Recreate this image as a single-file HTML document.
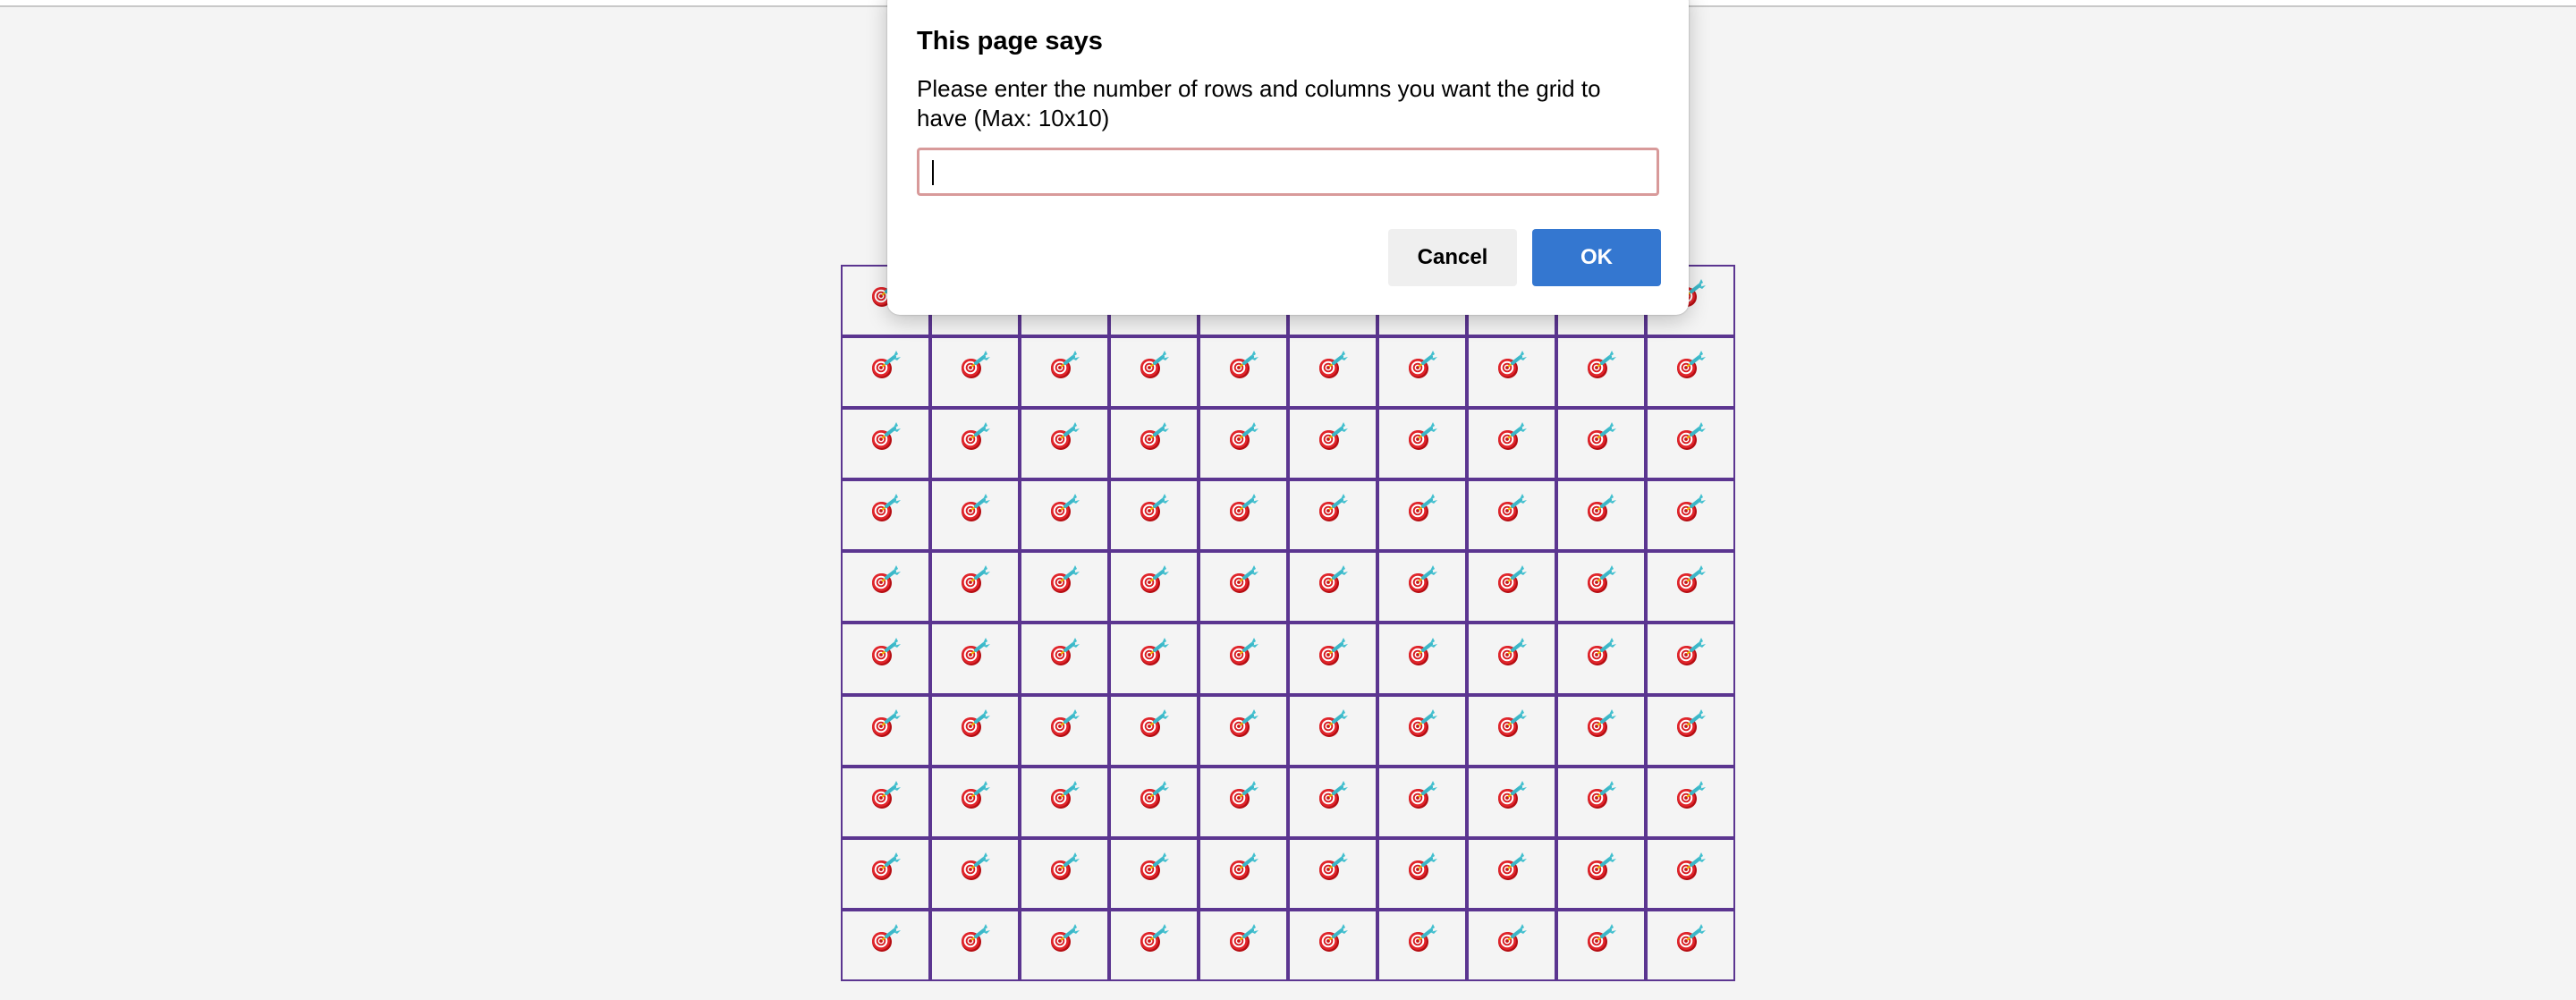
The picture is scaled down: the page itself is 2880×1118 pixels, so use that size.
<!DOCTYPE html>
<html><head><meta charset="utf-8"><style>
html,body{margin:0;padding:0;width:2880px;height:1118px;background:#f4f4f4;overflow:hidden;font-family:"Liberation Sans",Arial,sans-serif}
.topline{position:absolute;left:0;top:0;width:2880px;height:6px;background:#fff;border-bottom:2px solid #c8c8c8}
.grid{position:absolute;left:940px;top:296px;width:1000px;height:801px;display:grid;grid-template-columns:repeat(10,100px);grid-template-rows:repeat(10,80.1px)}
.c{box-sizing:border-box;border:2px solid #5b3590;display:flex;align-items:center;justify-content:center}
.c svg{width:36px;height:34px;margin-top:-16px}
.dlg{position:absolute;left:992px;top:-12px;width:896px;height:364px;background:#fff;border-radius:14px;box-shadow:0 6px 24px rgba(0,0,0,.22),0 0 2px rgba(0,0,0,.25)}
.t{position:absolute;left:33px;top:42px;font-size:29px;font-weight:bold;color:#000}
.m{position:absolute;left:33px;top:95px;font-size:26px;line-height:33px;color:#000;width:860px;white-space:nowrap}
.in{position:absolute;left:33px;top:177px;width:830px;height:54px;box-sizing:border-box;border:3px solid #d89a9a;border-radius:4px}
.cur{position:absolute;left:14px;top:11px;width:2px;height:28px;background:#000}
.b{position:absolute;top:268px;height:64px;width:144px;border-radius:4px;font-size:24px;font-weight:600;display:flex;align-items:center;justify-content:center}
.cn{left:560px;background:#efefef;color:#000}
.ok{left:721px;background:#3477d0;color:#fff}
</style></head><body>
<div class="topline"></div>
<svg width="0" height="0" style="position:absolute"><defs><symbol id="d" viewBox="0 0 36 34">
<circle cx="14" cy="21" r="11" fill="#b50d12"/><circle cx="13" cy="20" r="10" fill="#e0242a"/><circle cx="13" cy="20" r="7.3" fill="#fff"/><circle cx="13" cy="20" r="5.3" fill="#d81c22"/><circle cx="13" cy="20" r="3.4" fill="#fff"/><circle cx="13" cy="20" r="1.9" fill="#c4141a"/>
<path d="M14 19 L27 9" stroke="#f0b400" stroke-width="2"/><path d="M19 15 L28 8" stroke="#3bb7c8" stroke-width="4" stroke-linecap="round"/>
<path d="M26 9 L30 1 L32 5 Z M27 10 L35 8 L31 12 Z" fill="#43c0cf"/></symbol></defs></svg>
<div class="grid" id="g"></div>
<div class="dlg">
<div class="t">This page says</div>
<div class="m">Please enter the number of rows and columns you want the grid to<br>have (Max: 10x10)</div>
<div class="in"><div class="cur"></div></div>
<div class="b cn">Cancel</div><div class="b ok">OK</div>
</div>
<script>
var g=document.getElementById('g'),h='';for(var i=0;i<100;i++)h+='<div class="c"><svg><use href="#d"/></svg></div>';g.innerHTML=h;
</script>
</body></html>
